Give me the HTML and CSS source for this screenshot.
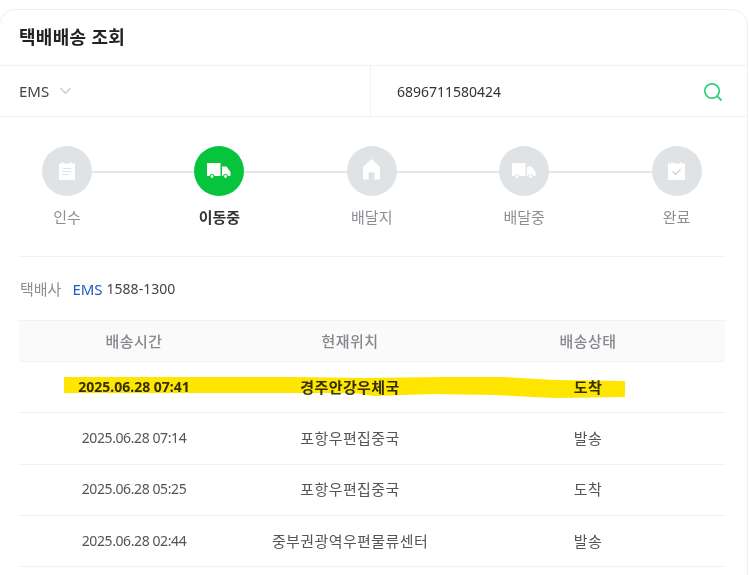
FILE: index.html
```html
<!DOCTYPE html>
<html lang="ko">
<head>
<meta charset="utf-8">
<title>택배배송 조회</title>
<link rel="stylesheet" href="styles.css">
</head>
<body>
<main class="card">
  <h1 class="title">택배배송 조회</h1>
  <div class="search">
    <div class="carrier">
      <span>EMS</span>
      <svg class="chev" width="13" height="8" viewBox="0 0 14 8"><path d="M1.500 1l5.500 5.500L12.500 1" fill="none" stroke="#c9ccd0" stroke-width="1.600"/></svg>
    </div>
    <div class="invoice">
      <span>6896711580424</span>
      <svg width="20" height="20" viewBox="0 0 20 20"><circle cx="9" cy="9" r="7.200" fill="none" stroke="#2fd07a" stroke-width="1.700"/><path d="M14.200 14.200l4.300 4.300" stroke="#2fd07a" stroke-width="1.800" fill="none"/></svg>
    </div>
  </div>
  <div class="content">
    <ol class="steps">
      <li class="step">
        <span class="dot"><svg class="ic-doc" width="16" height="18" viewBox="0 0 16 18"><path d="M0 1.500h3V0h1.300v1.500h7.400V0H13v1.500h3V18H0z" fill="#fff"/><path d="M3.500 6.500h9M3.500 9.500h9M3.500 12.500h6" stroke="#e0e3e6" stroke-width="1.100"/></svg></span>
        <span class="label">인수</span>
      </li>
      <li class="step active">
        <span class="dot"><svg width="24" height="16" viewBox="0 0 24 16"><path d="M0 0h13.500v13H0zM15 3.500h4.500l4 5.500v4h-8.500z" fill="#fff"/><circle cx="5" cy="13.500" r="2" fill="#fff" stroke="#06c53c" stroke-width="1.100"/><circle cx="18.500" cy="13.500" r="2" fill="#fff" stroke="#06c53c" stroke-width="1.100"/></svg></span>
        <span class="label">이동중</span>
      </li>
      <li class="step">
        <span class="dot"><svg class="ic-home" width="17" height="21" viewBox="0 0 17 21"><path d="M8.500 0l8.500 8v11.500q0 1-1 1h-4.500v-7h-6v7H1q-1 0-1-1V8z" fill="#fff"/></svg></span>
        <span class="label">배달지</span>
      </li>
      <li class="step">
        <span class="dot"><svg width="24" height="16" viewBox="0 0 24 16"><path d="M0 0h13.500v13H0zM15 3.500h4.500l4 5.500v4h-8.500z" fill="#fff"/><circle cx="5" cy="13.500" r="2" fill="#fff" stroke="#e0e3e6" stroke-width="1.100"/><circle cx="18.500" cy="13.500" r="2" fill="#fff" stroke="#e0e3e6" stroke-width="1.100"/></svg></span>
        <span class="label">배달중</span>
      </li>
      <li class="step">
        <span class="dot"><svg class="ic-doc" width="17" height="18" viewBox="0 0 17 18"><path d="M0 1.500h3.500V0h1.300v1.500h7.400V0h1.300v1.500H17V18H0z" fill="#fff"/><path d="M4.500 9.500l3 3 5-5" fill="none" stroke="#c9cdd1" stroke-width="1.100"/></svg></span>
        <span class="label">완료</span>
      </li>
    </ol>
    <p class="company"><span class="company-key">택배사</span><a class="company-name">EMS</a><span class="company-tel">1588-1300</span></p>
    <div class="table-wrap">
      <table class="track">
        <thead>
          <tr><th class="c1">배송시간</th><th class="c2">현재위치</th><th class="c3">배송상태</th></tr>
        </thead>
        <tbody>
          <tr class="latest"><td class="date">2025.06.28 07:41</td><td>경주안강우체국</td><td>도착</td></tr>
          <tr><td class="date">2025.06.28 07:14</td><td>포항우편집중국</td><td>발송</td></tr>
          <tr><td class="date">2025.06.28 05:25</td><td>포항우편집중국</td><td>도착</td></tr>
          <tr><td class="date">2025.06.28 02:44</td><td>중부권광역우편물류센터</td><td>발송</td></tr>
        </tbody>
      </table>
      <svg class="marker" width="562" height="24" viewBox="0 0 562 24"><path d="M0 2 L230 2 L300 3 L380 2 L440 2 L490 5 L561 6 L561 22 L490 23 L430 20 L370 19 L310 21 L290 18 L0 18z" fill="#ffe600"/></svg>
    </div>
  </div>
</main>
</body>
</html>
```
FILE: styles.css
```css
* { box-sizing: border-box; }
html, body { margin: 0; padding: 0; background: #fff; overflow: hidden; }
body {
  height: 575px;
  padding-top: 9px;
  font-family: "Noto Sans", "Noto Sans CJK KR", sans-serif;
  color: #333;
}
.card {
  width: 749px;
  height: 590px;
  margin-left: -1px;
  border: 1px solid #eeeff1;
  border-radius: 16px;
  background: #fff;
}
.title {
  margin: 0;
  height: 56px;
  padding-left: 19px;
  font-size: 18px;
  font-weight: 700;
  letter-spacing: 0.3px;
  line-height: 54px;
  color: #222;
  border-bottom: 1px solid #f1f2f4;
}
.search {
  display: flex;
  height: 51px;
  font-size: 14px;
  border-bottom: 1px solid #f1f2f4;
}
.carrier {
  display: flex;
  align-items: center;
  gap: 10px;
  width: 371px;
  padding-left: 19px;
  font-size: 15px;
  border-right: 1px solid #f1f2f4;
  color: #444;
}
.invoice {
  flex: 1;
  display: flex;
  align-items: center;
  justify-content: space-between;
  padding: 1px 24px 0 26px;
  color: #333;
}
.content { padding: 0 22px 0 19px; }
.steps {
  position: relative;
  display: flex;
  justify-content: space-between;
  margin: 0;
  padding: 29px 0.5px 27px 0;
  list-style: none;
  border-bottom: 1px solid #f1f2f4;
}
.steps::before {
  content: "";
  position: absolute;
  left: 48px;
  right: 49px;
  top: 54px;
  height: 2px;
  background: #e4e7ea;
}
.step {
  position: relative;
  width: 96px;
  display: flex;
  flex-direction: column;
  align-items: center;
  gap: 10px;
}
.dot {
  width: 50px;
  height: 50px;
  border-radius: 50%;
  background: #e0e3e6;
  display: flex;
  align-items: center;
  justify-content: center;
}
.ic-doc { margin-top: -1px; }
.ic-home { margin-top: -4px; }
.label {
  font-size: 15px;
  line-height: 23px;
  color: #8b8f94;
}
.active .dot { background: #06c53c; }
.active .label { color: #333; font-weight: 700; }
.company {
  display: flex;
  margin: 0;
  padding-top: 21px;
  padding-left: 1px;
  height: 63px;
  font-size: 14px;
  line-height: 22px;
}
.company-key { color: #8b8f94; margin-right: 11px; font-size: 15px; }
.company-name { color: #1c5fc4; margin-right: 4px; font-size: 15px; }
.company-tel { color: #444; }
.table-wrap { position: relative; }
.track {
  width: 706px;
  table-layout: fixed;
  border-collapse: collapse;
  font-size: 15px;
  letter-spacing: 0.4px;
  text-align: center;
}
.c1 { width: 230px; }
.c2 { width: 202px; }
.track th {
  height: 41px;
  padding: 0 0 2px;
  font-weight: 500;
  color: #85898e;
  background: #fafafa;
  border-top: 1px solid #f1f2f4;
  border-bottom: 1px solid #f1f2f4;
}
.track td {
  height: 51.300px;
  padding: 0 0 2px;
  color: #555;
  border-bottom: 1px solid #f1f2f4;
}
.track .date {
  font-size: 14px;
  letter-spacing: -0.4px;
}
.latest td { font-weight: 700; color: #333; }
.track .latest .date { letter-spacing: 0; }
.marker {
  position: absolute;
  left: 45px;
  top: 55px;
  mix-blend-mode: multiply;
  pointer-events: none;
}
```
